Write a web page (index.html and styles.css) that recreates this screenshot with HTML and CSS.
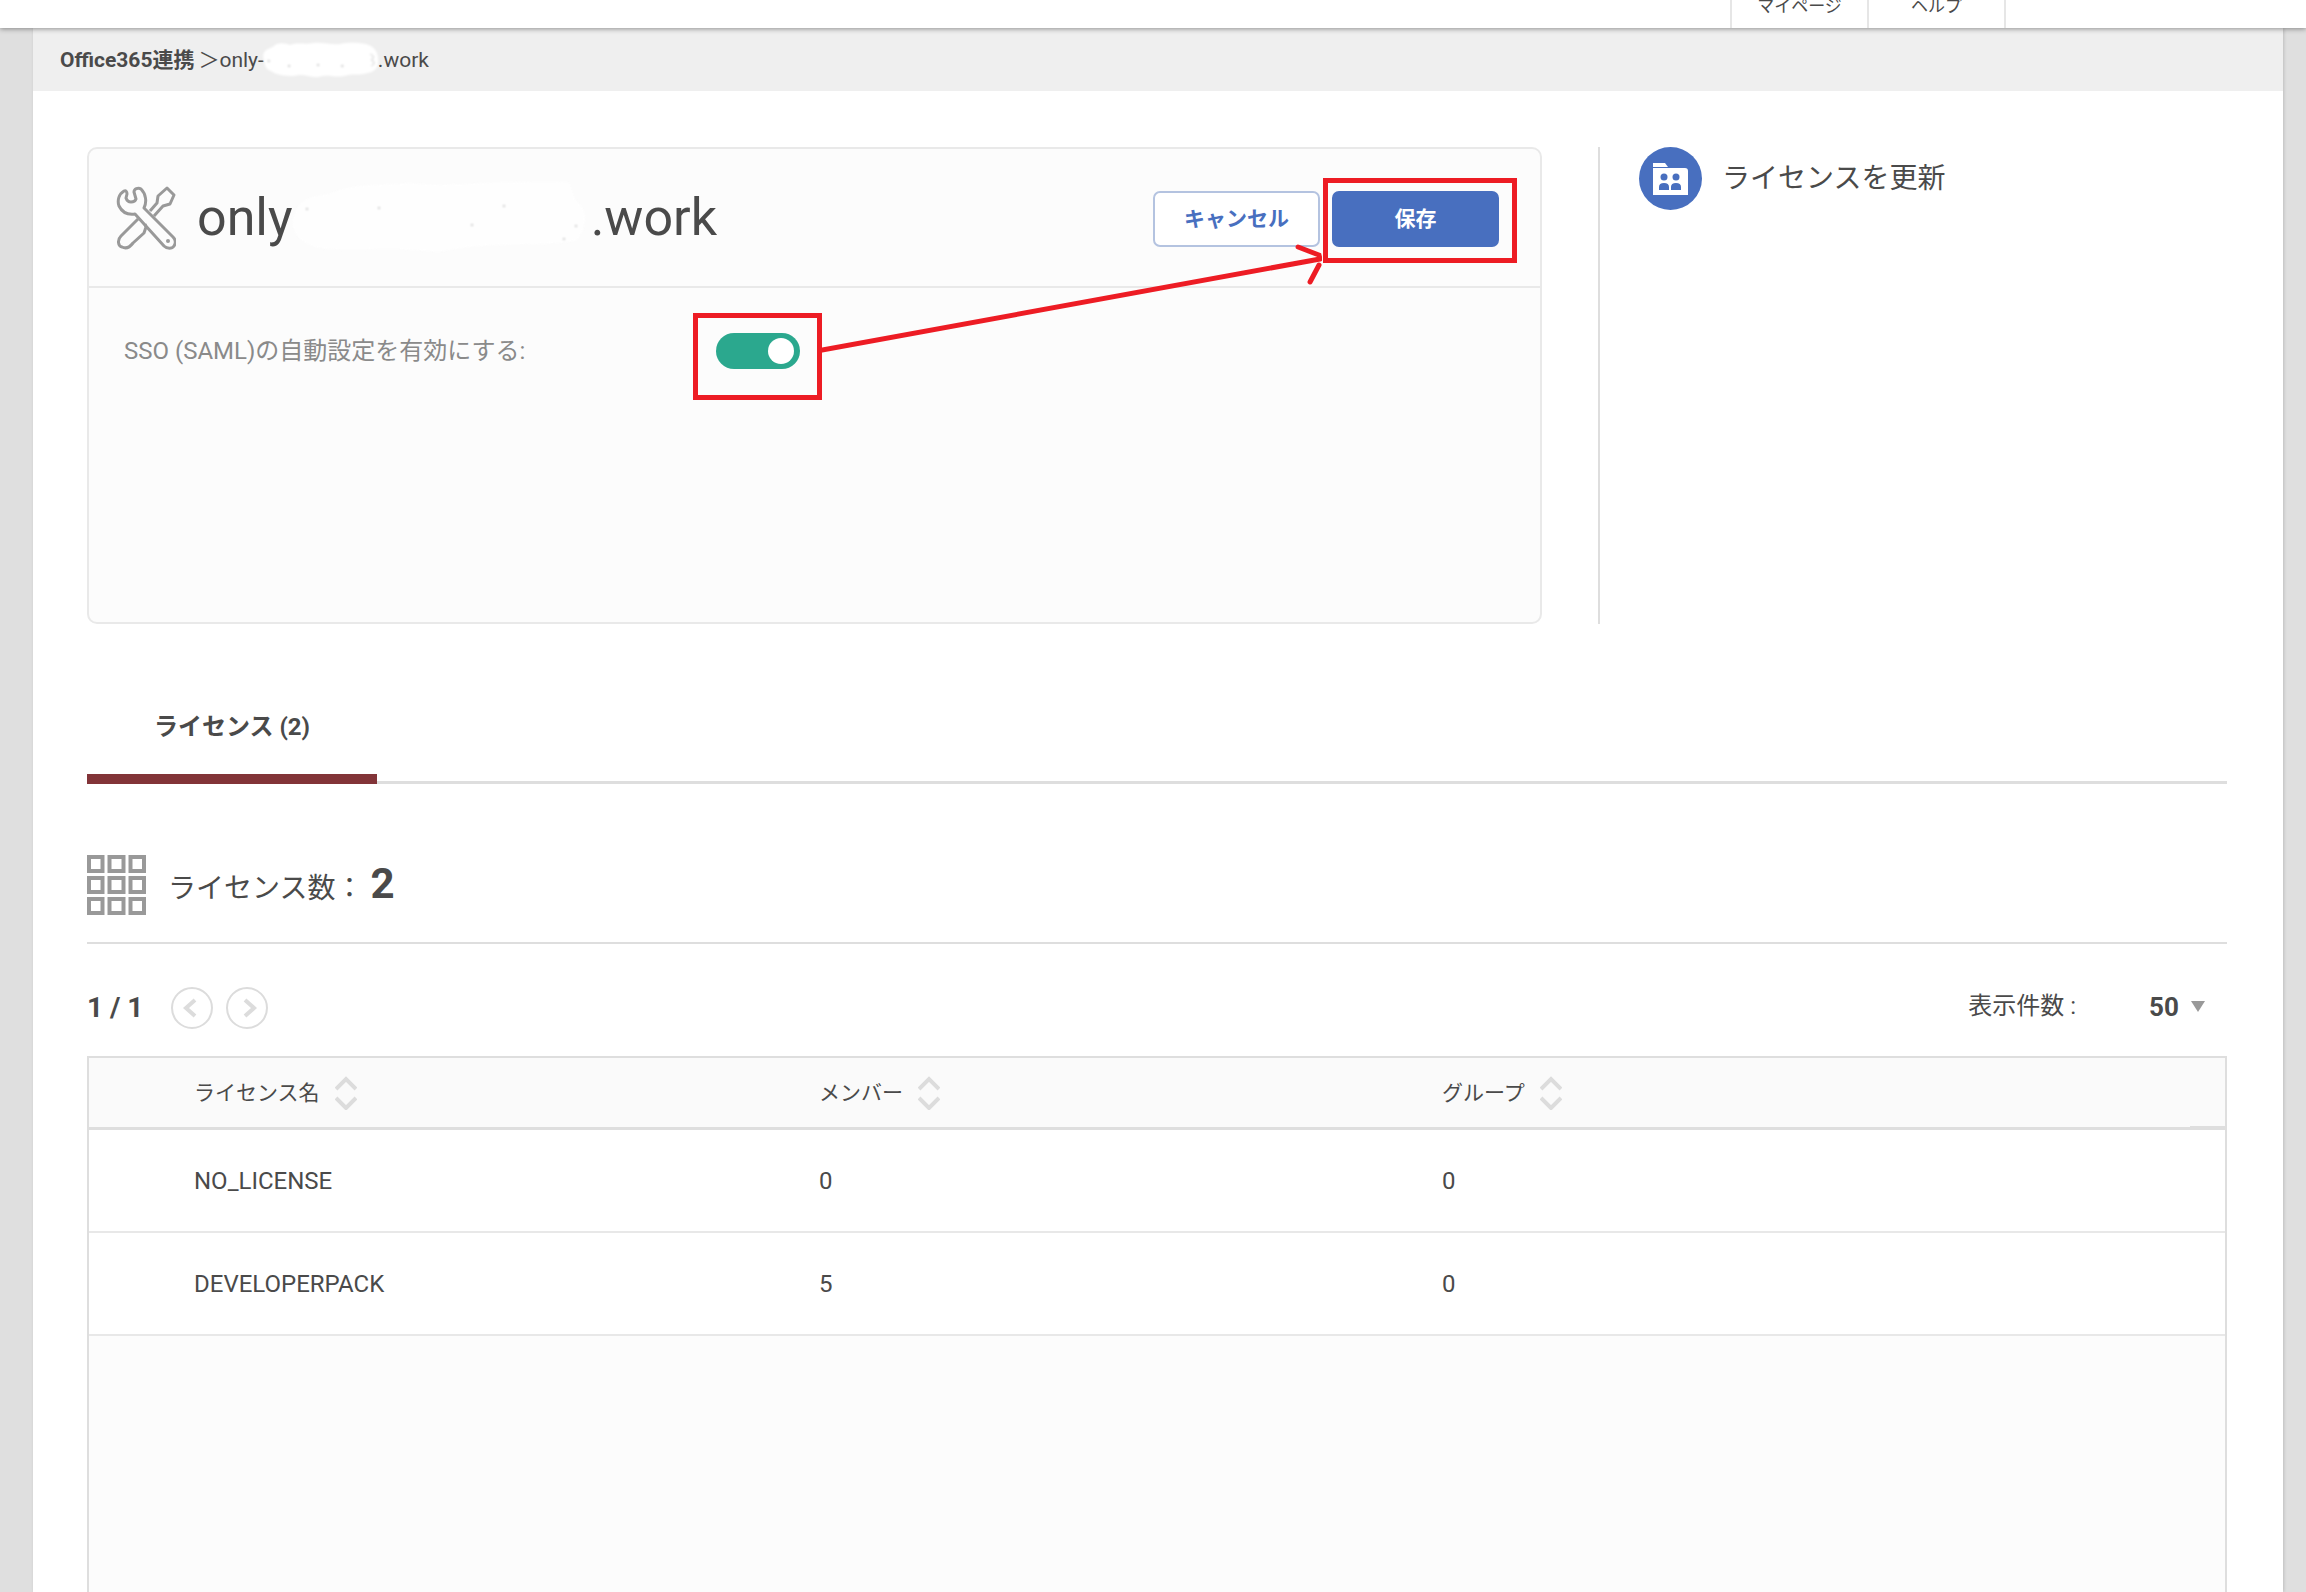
FILE: index.html
```html
<!DOCTYPE html>
<html lang="ja">
<head>
<meta charset="utf-8">
<meta name="viewport" content="width=device-width, initial-scale=1">
<title>Office365連携</title>
<link rel="stylesheet" href="styles.css">
</head>
<body>
<header class="topbar">
  <nav class="topnav">
    <a class="topnav-link" href="#">マイページ</a>
    <a class="topnav-link" href="#">ヘルプ</a>
  </nav>
</header>
<main class="page">
  <nav class="breadcrumb">
    <a class="breadcrumb-root" href="#">Office365連携</a>
    <span>＞only-</span>
    <svg class="smudge" viewBox="0 0 124 36" preserveAspectRatio="none" aria-hidden="true"><path d="M3 18C0 10 6 7 12 5C17 0 24 1 30 3C38 0 46 3 54 1C64 0 72 3 82 2C92 0 100 1 108 2C117 4 121 10 121 17C122 25 118 30 110 31C102 34 94 31 86 34C76 36 70 32 60 35C50 36 44 31 34 34C24 34 16 33 10 29C4 27 4 22 3 18Z"/><g><circle cx="8" cy="19" r="1"/><circle cx="29" cy="24" r="1"/><circle cx="59" cy="23" r="1"/><circle cx="84" cy="24" r="1"/><path d="M113 12q6 3 1 6q6 3 0 6" fill="none" stroke="#ccc"/></g></svg>
    <span>.work</span>
  </nav>
  <div class="content">
    <div class="overview">
      <section class="card">
        <div class="card-head">
          <svg class="tools" viewBox="0 0 60 64" aria-hidden="true">
            <path d="M34 25L41 17L42 10L51 2L58 9L54 18L47 20L38 30"/>
            <path d="M22 33L5 50C1 54 2 60 6 61C10 63 14 61 17 57L28 47L30 41L29 38"/>
            <path d="M8 5C3 8 1 14 3 20C6 26 12 29 19 28L48 60C51 63 56 63 58 60C60 57 60 54 57 51L28 22C31 16 30 8 25 3C22 1 18 3 18 6L20 13C19 16 17 16 15 16C12 16 11 15 10 12L11 8C11 6 10 4 8 5Z"/>
            <circle cx="52" cy="55" r="2"/>
          </svg>
          <h1 class="card-title"><span>only</span><svg class="smudge-title" viewBox="0 0 304 76" aria-hidden="true"><path d="M4 40C8 20 20 16 40 14C70 2 90 6 120 3C160 8 200 0 280 2L286 20C300 30 298 46 288 60C260 68 200 60 150 72C100 66 60 72 30 68C14 64 2 54 4 40Z"/><g><circle cx="18" cy="29" r="1"/><circle cx="90" cy="28" r="1"/><circle cx="183" cy="45" r="1"/><circle cx="215" cy="26" r="1"/><circle cx="287" cy="46" r="1"/><circle cx="275" cy="59" r="1"/></g></svg><span>.work</span></h1>
          <div class="actions">
            <button class="btn" type="button">キャンセル</button>
            <div class="marked-save"><button class="btn btn-primary" type="button">保存</button></div>
          </div>
        </div>
        <div class="card-body">
          <label class="field-label" for="sso">SSO (SAML)の自動設定を有効にする:</label>
          <div class="marked-toggle"><input class="toggle" type="checkbox" id="sso" role="switch" checked></div>
        </div>
        <svg class="arrow" viewBox="0 0 502 110" preserveAspectRatio="none" aria-hidden="true"><path d="M0 106L500 15M478 3L499 11L500 15M499 21L490 38"/></svg>
      </section>
      <aside class="side">
        <a class="side-link" href="#">
          <svg class="side-icon" viewBox="0 0 63 63" aria-hidden="true">
            <circle cx="31.500" cy="31.500" r="31.500" fill="#486fbf"/>
            <path d="M14 16H26L29 20H14ZM14 21H46Q49 21 49 24V48H14Z" fill="#fff"/>
            <g fill="#486fbf"><circle cx="25" cy="30" r="3.500"/><circle cx="37" cy="30" r="3.500"/><path d="M20 43V40Q20 36 25 36Q30 36 30 40V43ZM32 43V40Q32 36 37 36Q42 36 42 40V43Z"/></g>
          </svg>
          <span>ライセンスを更新</span>
        </a>
      </aside>
    </div>
    <div class="tabs" role="tablist">
      <button class="tab" type="button" role="tab" aria-selected="true">ライセンス (2)</button>
    </div>
    <div class="summary">
      <svg class="grid-icon" viewBox="0 0 59 60" aria-hidden="true"><path d="M2 2h13.500v14h-13.500zM22.500 2h14v14h-14zM43.500 2h13.500v14h-13.500zM2 23h13.500v14h-13.500zM22.500 23h14v14h-14zM43.500 23h13.500v14h-13.500zM2 44h13.500v14h-13.500zM22.500 44h14v14h-14zM43.500 44h13.500v14h-13.500z"/></svg>
      <p class="summary-text">ライセンス数： <strong class="summary-count">2</strong></p>
    </div>
    <div class="pager">
      <span class="pager-pos">1 / 1</span>
      <button class="pager-btn" type="button" aria-label="前へ"><svg viewBox="0 0 42 42"><path d="M24 13L15 21L24 29"/></svg></button>
      <button class="pager-btn" type="button" aria-label="次へ"><svg viewBox="0 0 42 42"><path d="M19 13L28 21L19 29"/></svg></button>
      <label class="size-label" for="size">表示件数 :</label>
      <div class="size-wrap">
        <select class="size" id="size"><option>50</option></select>
        <svg class="caret" viewBox="0 0 14 11" aria-hidden="true"><path d="M0 0H14L7 11Z"/></svg>
      </div>
    </div>
    <div class="table-box">
      <table class="table">
        <colgroup><col class="col-name"><col class="col-num"><col><col class="col-end"></colgroup>
        <thead>
          <tr>
            <th><button class="sort" type="button">ライセンス名<svg class="sort-icon" viewBox="0 0 22 34"><path d="M1 13L11 3L21 13M1 22L11 32L21 22"/></svg></button></th>
            <th><button class="sort" type="button">メンバー<svg class="sort-icon" viewBox="0 0 22 34"><path d="M1 13L11 3L21 13M1 22L11 32L21 22"/></svg></button></th>
            <th><button class="sort" type="button">グループ<svg class="sort-icon" viewBox="0 0 22 34"><path d="M1 13L11 3L21 13M1 22L11 32L21 22"/></svg></button></th>
            <th class="th-end"></th>
          </tr>
        </thead>
        <tbody>
          <tr><td>NO_LICENSE</td><td>0</td><td>0</td><td></td></tr>
          <tr><td>DEVELOPERPACK</td><td>5</td><td>0</td><td></td></tr>
        </tbody>
      </table>
    </div>
  </div>
</main>
</body>
</html>
```
FILE: styles.css
```css
* { box-sizing: border-box; }

body {
  margin: 0;
  min-height: 100vh;
  display: flex;
  flex-direction: column;
  background: #dfdfdf;
  color: #4a4a4a;
  font-family: Roboto, "Noto Sans CJK JP", sans-serif;
  font-size: 24px;
  line-height: 32px;
}

a { color: inherit; text-decoration: none; }
button, select { font: inherit; color: inherit; padding: 0; border: 0; background: none; }
svg { display: block; flex: none; }

.topbar {
  position: relative;
  z-index: 1;
  height: 28px;
  display: flex;
  justify-content: flex-end;
  padding-right: 300px;
  background: #fff;
  box-shadow: 0 1px 5px rgba(0, 0, 0, .4);
}
.topnav { display: flex; border-left: 2px solid #e6e6e6; }
.topnav-link {
  display: flex;
  align-items: flex-end;
  justify-content: center;
  width: 137px;
  padding-bottom: 10px;
  border-right: 2px solid #e6e6e6;
  font-size: 17px;
  line-height: 24px;
}

.page {
  flex: 1;
  display: flex;
  flex-direction: column;
  margin: 0 23px 0 33px;
  background: #fff;
  box-shadow: 1px 0 3px rgba(0, 0, 0, .15);
}

.breadcrumb {
  display: flex;
  align-items: center;
  height: 63px;
  padding-left: 27px;
  background: #efefef;
  font-size: 21px;
}
.breadcrumb-root { margin-right: 4px; font-weight: 700; }
.smudge { width: 120px; height: 36px; margin: 0 -3px; fill: #fff; filter: blur(1px); }
.smudge g { fill: #bbb; }

.content {
  flex: 1;
  display: flex;
  flex-direction: column;
  padding: 56px 56px 0 54px;
}

.overview { display: grid; grid-template-columns: 1fr 629px; gap: 56px; }
.card {
  position: relative;
  min-height: 477px;
  border: 2px solid #e9e9e9;
  border-radius: 10px;
  background: #fcfcfc;
}
.card-head {
  display: flex;
  align-items: center;
  height: 139px;
  padding: 0 41px 0 27px;
  border-bottom: 2px solid #e9e9e9;
}
.tools { width: 60px; height: 64px; fill: none; stroke: #999; stroke-width: 3; stroke-linejoin: round; }
.tools circle { fill: #999; stroke: none; }
.card-title {
  display: flex;
  align-items: center;
  margin: 0 0 0 21px;
  font-size: 52px;
  font-weight: 400;
  line-height: 72px;
}
.smudge-title { width: 304px; height: 76px; margin: 0 -2px 0 -4px; fill: #fefefe; filter: blur(1px); }
.smudge-title g { fill: #bbb; }
.actions { display: flex; gap: 12px; margin-left: auto; padding-top: 2px; }
.btn {
  display: block;
  width: 167px;
  height: 56px;
  border: 2px solid #b4c3e0;
  border-radius: 7px;
  background: #fff;
  color: #486fbf;
  font-size: 21px;
  font-weight: 700;
}
.btn-primary { border-color: #486fbf; background: #486fbf; color: #fff; }

.marked-save, .marked-toggle { position: relative; }
.marked-save::after, .marked-toggle::after {
  content: "";
  position: absolute;
  border: 5px solid #ed1c24;
  pointer-events: none;
}
.marked-save::after { inset: -13px -18px -16px -9px; }
.marked-toggle::after { inset: -20px -22px -31px -23px; }
.arrow {
  position: absolute;
  top: 95px;
  left: 733px;
  width: calc(100% - 951px);
  height: 110px;
  fill: none;
  stroke: #ed1c24;
  stroke-width: 5;
  stroke-linecap: round;
}

.card-body {
  display: grid;
  grid-template-columns: 592px 84px;
  align-items: center;
  padding: 45px 35px;
}
.field-label { color: #8a8a8a; }
.toggle {
  appearance: none;
  display: block;
  width: 84px;
  height: 36px;
  margin: 0;
  padding: 5px 6px;
  border-radius: 18px;
  background: #2ba88e;
}
.toggle::before {
  content: "";
  display: block;
  width: 26px;
  height: 26px;
  margin-left: auto;
  border-radius: 50%;
  background: #fff;
}

.side { padding-left: 39px; border-left: 2px solid #dedede; }
.side-link { display: flex; align-items: center; gap: 20px; font-size: 28px; }
.side-icon { width: 63px; height: 63px; }

.tabs { display: flex; margin-top: 72px; height: 88px; border-bottom: 3px solid #dedede; }
.tab {
  width: 290px;
  height: 88px;
  padding-bottom: 16px;
  border-bottom: 10px solid #823438;
  font-weight: 700;
}

.summary {
  display: flex;
  align-items: center;
  gap: 22px;
  height: 160px;
  padding-top: 43px;
  border-bottom: 2px solid #dedede;
}
.grid-icon { width: 59px; height: 60px; fill: none; stroke: #999; stroke-width: 4; }
.summary-text { margin: 0; padding-top: 4px; font-size: 28px; line-height: 48px; }
.summary-count { font-size: 42px; font-weight: 700; }

.pager { display: flex; align-items: center; height: 112px; padding: 15px 22px 0 0; }
.pager-pos { width: 84px; font-size: 28px; font-weight: 700; }
.pager-btn {
  width: 42px;
  height: 42px;
  margin-right: 13px;
  border: 2px solid #dcdcdc;
  border-radius: 50%;
}
.pager-btn svg { width: 42px; height: 42px; margin: -2px; fill: none; stroke: #dcdcdc; stroke-width: 4; }
.size-label { margin-left: auto; margin-right: 73px; padding-bottom: 3px; }
.size-wrap { display: flex; align-items: center; gap: 12px; padding-bottom: 2px; }
.size { appearance: none; font-size: 26px; font-weight: 700; }
.caret { width: 14px; height: 11px; fill: #999; }

.table-box { flex: 1; border: 2px solid #dedede; border-bottom: 0; background: #fcfcfc; }
.table { width: 100%; border-collapse: separate; border-spacing: 0; table-layout: fixed; }
.col-name { width: 730px; }
.col-num { width: 623px; }
.col-end { width: 35px; }
th { height: 72px; padding: 0; border-bottom: 3px solid #dedede; background: #fafafa; font-size: 21px; font-weight: 400; text-align: left; }
td { height: 103px; padding: 0; border-bottom: 2px solid #e8e8e8; background: #fff; }
th:first-child, td:first-child { padding-left: 105px; }
.th-end { box-shadow: inset 0 -1px #dedede; }
.sort { display: flex; align-items: center; gap: 15px; }
.sort-icon { width: 22px; height: 34px; fill: none; stroke: #dcdcdc; stroke-width: 4; }
```
